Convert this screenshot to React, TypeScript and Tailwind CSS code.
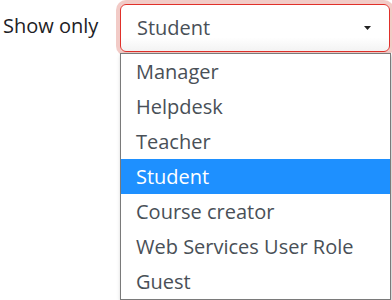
const ROLES = [
  "Manager",
  "Helpdesk",
  "Teacher",
  "Student",
  "Course creator",
  "Web Services User Role",
  "Guest",
];

export default function App() {
  const selected = "Student";
  return (
    <div
      className="w-[392px] h-[300px] bg-white flex items-start overflow-hidden"
      style={{ fontFamily: '"Open Sans", Arial, sans-serif' }}
    >
      <label className="ml-[3px] mt-[12px] w-[117px] text-[20px] leading-[28px] text-[#1d2125]">
        Show only
      </label>
      <div className="flex flex-col mt-[4px]">
        {/* Select */}
        <div className="w-[270px] h-[48px] rounded-[6px] border border-[#e0302a] bg-gradient-to-b from-white from-70% to-[#f3f3f3] shadow-[0_0_0_4px_rgba(202,49,32,0.25)] flex items-center pl-[16px] pr-[18px]">
          <span className="flex-1 text-[20px] text-[#495057]">{selected}</span>
          <svg width="7" height="4" viewBox="0 0 7 4">
            <path d="M0 0h7L3.5 4z" fill="#222" />
          </svg>
        </div>
        {/* Dropdown list */}
        <ul className="mt-[1px] w-[271px] border border-[#7a7a7a] bg-white shadow-[1px_2px_4px_rgba(0,0,0,0.25)]">
          {ROLES.map((r) => (
            <li
              key={r}
              className={`h-[35px] pl-[15px] flex items-center text-[20px] ${
                r === selected ? "bg-[#1e90ff] text-white" : "text-[#495057]"
              }`}
            >
              {r}
            </li>
          ))}
        </ul>
      </div>
    </div>
  );
}
